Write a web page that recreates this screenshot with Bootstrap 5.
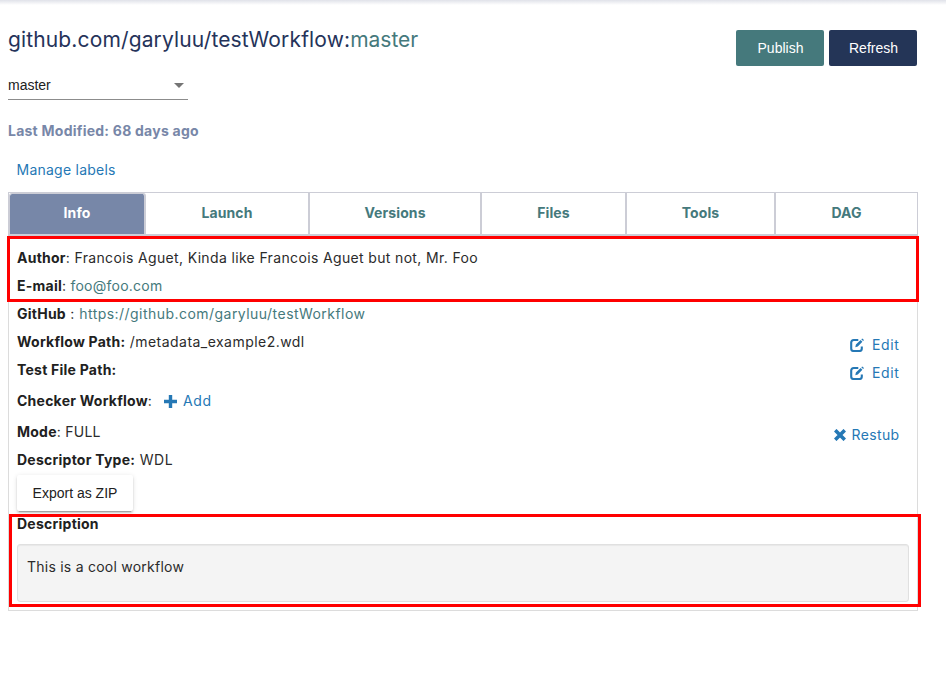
<!DOCTYPE html>
<html lang="en">
<head>
<meta charset="utf-8">
<title>Workflow</title>
<link href="https://cdn.jsdelivr.net/npm/bootstrap@5.3.0/dist/css/bootstrap.min.css" rel="stylesheet">
<style>
body{font:14px/20px Inter,sans-serif;color:#2b2b2b;background:#fff;letter-spacing:.24px}
a{text-decoration:none;color:#2578b5}
b{font-weight:700;color:#212121}
.sp-35{letter-spacing:.35px}
.sp-45{letter-spacing:.46px}
.sp-60{letter-spacing:.62px}
.top-strip{height:5px;background:linear-gradient(#e0e2e9,#fff)}
.page-wrap{width:910px;margin-left:8px}
.wf-title{font-size:21px;line-height:28px;font-weight:400;color:#25335a;margin:21px 0 0;letter-spacing:.14px}
.wf-title .teal{letter-spacing:0}
.teal,a.teal{color:#45797c}
.version-select{width:180px;height:30px;margin-top:16px;border-bottom:1px solid #8c8c8c;font:14px/20px "Liberation Sans",sans-serif;letter-spacing:0;color:#212121;padding:5px 4px 0 0}
.caret-down{border:5px solid transparent;border-top-color:#757575;border-bottom:0;margin-top:8px}
.mat-btn{font:14px/36px "Liberation Sans",sans-serif;letter-spacing:0;height:36px;border:0;border-radius:2px;padding:0;color:#fff}
.mat-btn.act{width:88px;margin-top:25px;padding-left:1px}
.bg-teal{background:#45797c}
.bg-navy{background:#243557}
.modified{font-weight:700;color:#7887a8;margin-top:21px}
.labels{padding-left:8.5px;margin-top:19px}
.tab-strip{height:44px;margin-top:12px;border:1px solid #cccdd6;border-bottom-width:2px}
.tab-cell{font-weight:700;letter-spacing:.1px;color:#45797c;border-right:2px solid #cccdd6;line-height:40px;text-align:center}
.tab-cell:last-child{border-right:0}
.tab-cell.on{background:#7787a8;background-clip:padding-box;color:#fff;border-radius:3px 3px 0 0;border:solid #cccdd6;border-width:1px 2px 0 1px;line-height:38px}
.t1{width:137px}.t2{width:164px}.t3{width:172px}.t4{width:145px}.t5{width:149px}
.info-panel{border:1px solid #dcdcdc;border-top:0;height:375px;padding:8px 8px 0}
.line{height:28px;line-height:28px;white-space:pre}
.line.tall{height:34px;line-height:34px}
.line .edit{margin-top:4px;height:26px;padding-right:9.5px}
.line svg{display:block}
.line .edit svg{margin-top:-1px}
.plus-link{margin-left:12px}
.plus-link svg{margin-right:6px}
.stub-icon{margin-right:5.5px}
.export{width:116px;color:#212121;background:#fff;margin:1px 0 0 0;box-shadow:0 3px 1px -2px rgba(0,0,0,.2),0 2px 2px rgba(0,0,0,.14),0 1px 5px rgba(0,0,0,.12)}
.desc{line-height:20px;height:33px;padding-top:3px}
.well-box{height:58px;border:1px solid #e0e0e0;border-radius:3px;background:#f4f4f4;padding:12px 9px;box-shadow:inset 0 1px 1px rgba(0,0,0,.05)}
.mark-box{border:3px solid #f00;pointer-events:none}
.mark-a{left:-2px;top:0;width:912px;height:66px}
.mark-b{left:0;top:278px;width:912px;height:93px}
</style>
<script src="https://cdn.jsdelivr.net/npm/bootstrap@5.3.0/dist/js/bootstrap.bundle.min.js"></script>
</head>
<body>
<svg class="d-none">
  <symbol id="edit-icon" viewBox="0 0 14 14"><path d="M8.3 2H3.8Q1.2 2 1.2 4.6V10.4Q1.2 13 3.8 13H9.2Q11.8 13 11.8 10.4V8.4" fill="none" stroke="currentColor" stroke-width="2.1"/><path d="M5.3 9.3L5.9 6.6 10.6 1.9 12.4 3.7 7.8 8.6Z M11.3 1.3L12.2.4 14 2.1 13.1 3Z" fill="currentColor"/></symbol>
</svg>
<div class="top-strip"></div>
<main class="page-wrap">
  <header class="d-flex justify-content-between align-items-start">
    <div>
      <h1 class="wf-title">github.com/garyluu/testWorkflow:<span class="teal">master</span></h1>
      <div class="version-select d-flex justify-content-between align-items-start"><span>master</span><i class="caret-down"></i></div>
    </div>
    <div class="d-flex" style="gap:5px;margin-right:1px">
      <button class="mat-btn act bg-teal">Publish</button>
      <button class="mat-btn act bg-navy">Refresh</button>
    </div>
  </header>
  <div class="modified">Last Modified: 68 days ago</div>
  <div class="labels"><a href="#">Manage labels</a></div>
  <nav class="tab-strip d-flex">
    <div class="tab-cell on t1">Info</div>
    <div class="tab-cell t2">Launch</div>
    <div class="tab-cell t3">Versions</div>
    <div class="tab-cell t4">Files</div>
    <div class="tab-cell t5">Tools</div>
    <div class="tab-cell flex-fill">DAG</div>
  </nav>
  <section class="info-panel position-relative">
    <div class="line"><b>Author</b><span class="sp-35">: Francois Aguet, Kinda like Francois Aguet but not, Mr. Foo</span></div>
    <div class="line"><b>E-mail</b>: <a href="#" class="teal">foo@foo.com</a></div>
    <div class="line"><b>GitHub</b><span class="sp-45"> : <a href="#" class="teal">https://github.com/garyluu/testWorkflow</a></span></div>
    <div class="line d-flex justify-content-between"><div><b>Workflow Path:</b><span class="sp-45"> /metadata_example2.wdl</span></div><a href="#" class="edit d-flex align-items-center sp-60"><svg width="14" height="14" class="me-2"><use href="#edit-icon"/></svg>Edit</a></div>
    <div class="line d-flex justify-content-between"><b>Test File Path:</b><a href="#" class="edit d-flex align-items-center sp-60"><svg width="14" height="14" class="me-2"><use href="#edit-icon"/></svg>Edit</a></div>
    <div class="line tall d-flex"><b>Checker Workflow</b>:<a href="#" class="plus-link d-flex align-items-center sp-60"><svg width="13" height="13" viewBox="0 0 13 13"><path d="M6.5 0V13M0 6.5H13" stroke="currentColor" stroke-width="3.4"/></svg>Add</a></div>
    <div class="line d-flex justify-content-between"><div><b>Mode</b>: FULL</div><a href="#" class="edit d-flex align-items-center sp-35"><svg width="12" height="12" viewBox="0 0 12 12" class="stub-icon"><path d="M1.2 1.2L10.8 10.8M10.8 1.2L1.2 10.8" stroke="currentColor" stroke-width="3.6"/></svg>Restub</a></div>
    <div class="line"><b>Descriptor Type:</b><span class="sp-60"> WDL</span></div>
    <button class="mat-btn export d-block">Export as ZIP</button>
    <div class="desc"><b>Description</b></div>
    <div class="well-box">This is a cool workflow</div>
    <div class="mark-box mark-a position-absolute"></div>
    <div class="mark-box mark-b position-absolute"></div>
  </section>
</main>
</body>
</html>
